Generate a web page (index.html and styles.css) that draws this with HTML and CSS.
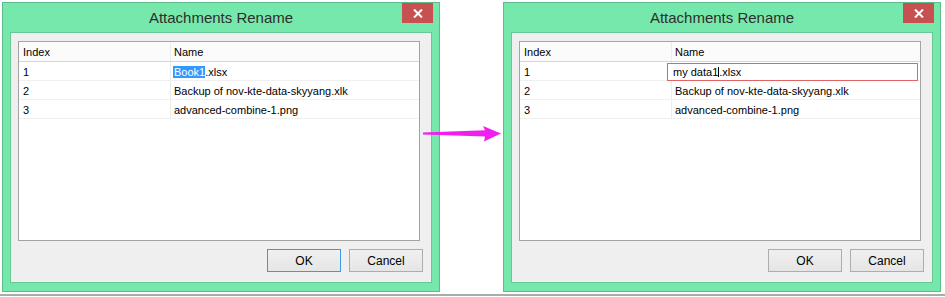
FILE: index.html
```html
<!DOCTYPE html>
<html>
<head>
<meta charset="utf-8">
<link rel="stylesheet" href="styles.css">
</head>
<body>
<div class="stage">
  <div class="dialog">
    <div class="titlebar">
      <span></span>
      <span class="title">Attachments Rename</span>
      <span class="close"><svg width="10" height="9" viewBox="0 0 10 9"><path d="M1 0.5 L9 8.5 M9 0.5 L1 8.5" stroke="#fff" stroke-width="2"/></svg></span>
    </div>
    <div class="panel">
      <div class="list">
        <div class="row head"><div class="c1">Index</div><div class="c2">Name</div></div>
        <div class="row"><div class="c1">1</div><div class="c2"><span class="sel">Book1</span>.xlsx</div></div>
        <div class="row"><div class="c1">2</div><div class="c2">Backup of nov-kte-data-skyyang.xlk</div></div>
        <div class="row"><div class="c1">3</div><div class="c2">advanced-combine-1.png</div></div>
      </div>
      <div class="buttons">
        <div class="btn default">OK</div>
        <div class="btn">Cancel</div>
      </div>
    </div>
  </div>
  <div class="dialog">
    <div class="titlebar">
      <span></span>
      <span class="title">Attachments Rename</span>
      <span class="close"><svg width="10" height="9" viewBox="0 0 10 9"><path d="M1 0.5 L9 8.5 M9 0.5 L1 8.5" stroke="#fff" stroke-width="2"/></svg></span>
    </div>
    <div class="panel">
      <div class="list">
        <div class="row head"><div class="c1">Index</div><div class="c2">Name</div></div>
        <div class="row editing"><div class="c1">1</div><div class="c2"><div class="edit">my data1<span class="caret"></span>.xlsx</div></div></div>
        <div class="row"><div class="c1">2</div><div class="c2">Backup of nov-kte-data-skyyang.xlk</div></div>
        <div class="row"><div class="c1">3</div><div class="c2">advanced-combine-1.png</div></div>
      </div>
      <div class="buttons">
        <div class="btn">OK</div>
        <div class="btn">Cancel</div>
      </div>
    </div>
  </div>
</div>
<div class="shadow"></div>
<svg class="arrow" width="945" height="297" viewBox="0 0 945 297">
  <path d="M423 132.6 L485 130.2 L483 126 L501 133.6 L484 141.6 L485 136.6 L423 134.4 Z" fill="#f01ff0"/>
</svg>
</body>
</html>
```
FILE: styles.css
```css
html, body {
  margin: 0;
  padding: 0;
  background: #ffffff;
}
body {
  width: 945px;
  height: 297px;
  position: relative;
  overflow: hidden;
  font-family: "Liberation Sans", Arial, sans-serif;
}
.stage {
  display: flex;
  gap: 63px;
  padding: 2px 0 0 2px;
}
.dialog {
  box-sizing: border-box;
  width: 438px;
  height: 290px;
  border: 1px solid #5cbd89;
  background: #77e8ab;
  display: flex;
  flex-direction: column;
}
.titlebar {
  height: 29px;
  display: grid;
  grid-template-columns: 1fr auto 1fr;
}
.title {
  align-self: center;
  font-size: 15px;
  color: #2e2e2e;
  margin-top: -1px;
}
.close {
  justify-self: end;
  align-self: start;
  width: 31px;
  height: 20px;
  margin-right: 6px;
  background: #c75050;
  display: flex;
  align-items: center;
  justify-content: center;
}
.close svg { display: block; }
.panel {
  box-sizing: border-box;
  margin: 0 7px;
  height: 251px;
  border: 1px solid #66c894;
  background: #efefef;
  padding: 8px 9px 0 7px;
  display: flex;
  flex-direction: column;
}
.list {
  box-sizing: border-box;
  width: 402px;
  height: 200px;
  border: 1px solid #a3a3a3;
  background: #ffffff;
  font-size: 11px;
  color: #000;
}
.row {
  display: flex;
  height: 19px;
  box-sizing: border-box;
  border-bottom: 1px solid #f0f0f0;
  position: relative;
}
.row.head {
  height: 20px;
  background: #fbfbfb;
  border-bottom: 1px solid #d6d6d6;
}
.c1 {
  box-sizing: border-box;
  width: 152px;
  border-right: 1px solid #ececec;
  padding-left: 4px;
  padding-top: 1px;
  display: flex;
  align-items: center;
}
.c2 {
  flex: 1;
  padding-left: 3px;
  padding-top: 1px;
  display: flex;
  align-items: center;
  white-space: nowrap;
}
.sel {
  display: inline-block;
  height: 12px;
  line-height: 12px;
  background: #3399ff;
  color: #ffffff;
  margin-left: -1px;
  padding-left: 1px;
}
.edit {
  position: absolute;
  left: 147px;
  top: 1px;
  width: 251px;
  height: 18px;
  box-sizing: border-box;
  border: 1px solid #e26464;
  background: #ffffff;
  padding-left: 5px;
  display: flex;
  align-items: center;
}
.caret {
  display: inline-block;
  width: 1px;
  height: 10px;
  background: #000;
}
.buttons {
  display: flex;
  justify-content: flex-end;
  gap: 8px;
  margin-top: 8px;
  margin-right: -1px;
}
.btn {
  box-sizing: border-box;
  width: 74px;
  height: 23px;
  border: 1px solid #adadad;
  background: linear-gradient(#f0f0f0, #e5e5e5);
  font-size: 12px;
  color: #000;
  display: flex;
  align-items: center;
  justify-content: center;
}
.btn.default {
  border-color: #3c98ec;
}
.shadow {
  height: 2px;
  margin-top: 2px;
  background: #ababab;
}
.arrow {
  position: absolute;
  left: 0;
  top: 0;
  pointer-events: none;
}
```
